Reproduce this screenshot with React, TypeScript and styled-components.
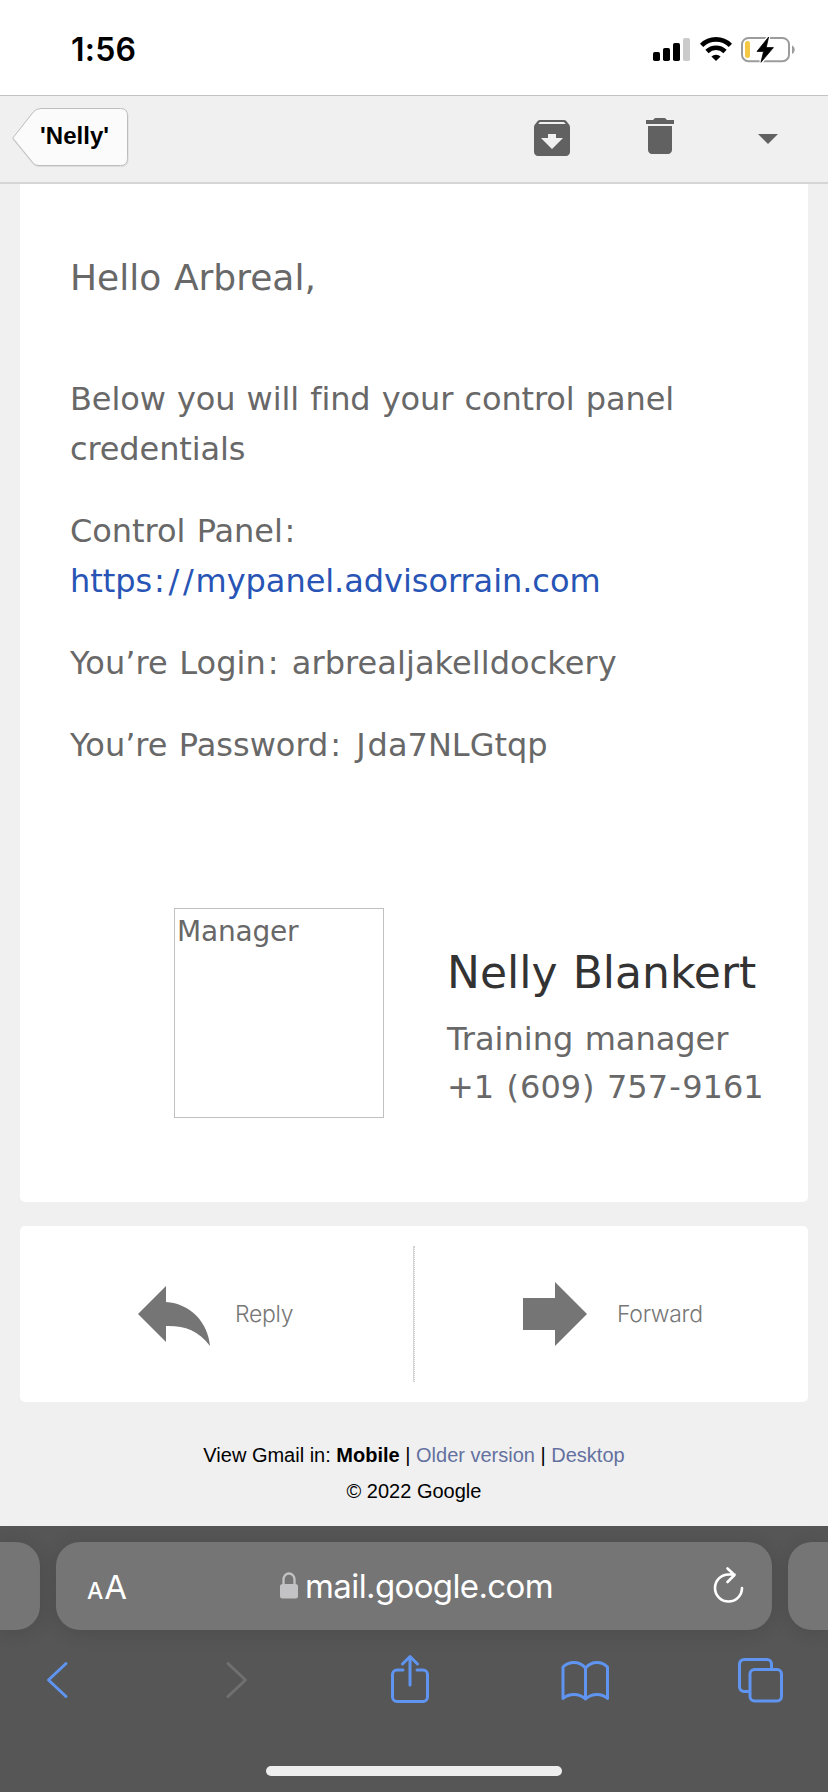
import React from 'react';
import styled, { createGlobalStyle } from 'styled-components';

const GlobalStyle = createGlobalStyle`
  html, body { margin: 0; padding: 0; background: #f0f0f0; }
  * { box-sizing: border-box; }
  svg { display: block; flex: none; }
`;

const Screen = styled.div`
  width: 828px;
  height: 1792px;
  display: flex;
  flex-direction: column;
  overflow: hidden;
  background: #f0f0f0;
`;

const StatusBar = styled.header`
  height: 95px;
  flex: none;
  display: flex;
  justify-content: space-between;
  padding: 30px 32px 0 71px;
  background: #fff;
`;

const Clock = styled.time`
  font: 600 32px/40px Inter, sans-serif;
  letter-spacing: 0.2px;
  color: #000;
`;

const StatusIcons = styled.div`
  display: flex;
  gap: 9px;
  padding-top: 6px;
`;

const MailBar = styled.nav`
  height: 89px;
  flex: none;
  display: flex;
  align-items: flex-start;
  justify-content: space-between;
  padding: 11px 36px 0 11px;
  background: #f0f0f0;
  border-top: 1px solid #c3c3c3;
  border-bottom: 2px solid #d5d5d5;
`;

const BackButton = styled.button`
  position: relative;
  width: 118px;
  height: 60px;
  padding: 0;
  border: 0;
  background: none;
`;

const BackShape = styled.svg`
  position: absolute;
  inset: 0;
`;

const BackLabel = styled.span`
  position: relative;
  display: block;
  padding: 0 0 2px 9px;
  text-align: left;
  margin-left: 20px;
  font: 700 24px/28px 'Liberation Sans', Arial, sans-serif;
  letter-spacing: 0.05px;
  color: #000;
`;

const MailActions = styled.div`
  display: flex;
  gap: 60px;
  padding-top: 7px;
`;

const IconSlot = styled.span<{ $raise?: number }>`
  display: block;
  margin-top: ${(p) => -(p.$raise ?? 0)}px;
`;

const Message = styled.article`
  flex: none;
  height: 1018px;
  margin: 0 20px;
  padding: 69px 0 0 50px;
  border-radius: 0 0 5px 5px;
  background: #fff;
  color: #686868;
  font-family: Verdana, 'DejaVu Sans', sans-serif;
  word-spacing: 1.2px;
`;

const Greeting = styled.h1`
  margin: 0 0 71px;
  font-size: 36px;
  line-height: 50px;
  font-weight: 400;
`;

const Paragraph = styled.p<{ $track?: number }>`
  width: 688px;
  margin: 0 0 32px;
  font-size: 32px;
  line-height: 50px;
  letter-spacing: ${(p) => p.$track ?? 0}px;
`;

const PanelLink = styled.a`
  color: #2754b5;
`;

const Wide = styled.span<{ $by: number }>`
  letter-spacing: ${(p) => p.$by}px;
  margin-left: ${(p) => p.$by / 2}px;
  margin-right: ${(p) => -p.$by / 2}px;
`;

const Signature = styled.section`
  display: flex;
  margin: 138px 0 0 104px;
`;

const Portrait = styled.div`
  width: 210px;
  height: 210px;
  flex: none;
  padding: 6px 0 0 2px;
  border: 1px solid #c0c0c0;
  font-size: 28px;
  line-height: 33px;
  letter-spacing: -0.2px;
`;

const Contact = styled.div`
  padding: 38px 0 0 63px;
  white-space: nowrap;
`;

const ContactName = styled.div`
  margin-bottom: 15px;
  font-size: 44px;
  line-height: 54px;
  color: #333;
`;

const ContactLine = styled.div`
  font-size: 32px;
  line-height: 48px;
`;

const ReplyCard = styled.section`
  flex: none;
  height: 176px;
  display: flex;
  margin: 24px 20px 0;
  padding: 20px 0;
  border-radius: 5px;
  background: #fff;
`;

const ReplyAction = styled.button<{ $inset: number; $gap: number; $edge: 'left' | 'right' }>`
  width: 394px;
  height: 136px;
  display: flex;
  align-items: center;
  gap: ${(p) => p.$gap}px;
  padding: 0 0 0 ${(p) => p.$inset}px;
  border: 0;
  ${(p) => (p.$edge === 'right' ? 'border-right: 1px solid #d6d6d6;' : 'border-left: 1px dotted #cccccc;')}
  background: none;
  color: #777;
  font: 300 23px/28px Inter, 'Liberation Sans', sans-serif;
  letter-spacing: -0.3px;
`;

const ReplyGlyph = styled.svg`
  margin-top: 4px;
`;

const Footer = styled.footer`
  flex: none;
  height: 124px;
  padding-top: 35px;
  text-align: center;
  font: 400 20px/36px 'Liberation Sans', Arial, sans-serif;
  color: #000;
`;

const FooterLink = styled.a`
  color: #64709f;
`;

const Browser = styled.section`
  flex: 1;
  padding-top: 16px;
  background: #565656;
`;

const TabStrip = styled.div`
  display: flex;
  gap: 16px;
`;

const NeighbourTab = styled.div<{ $side: 'left' | 'right' }>`
  width: 40px;
  height: 88px;
  flex: none;
  border-radius: ${(p) => (p.$side === 'left' ? '0 24px 24px 0' : '24px 0 0 24px')};
  background: #757575;
  box-shadow: 0 2px 20px rgba(0, 0, 0, 0.12);
`;

const AddressBar = styled.div`
  width: 716px;
  height: 88px;
  flex: none;
  display: flex;
  align-items: center;
  justify-content: space-between;
  padding: 0 28px 0 31px;
  border-radius: 24px;
  background: #757575;
  box-shadow: 0 2px 20px rgba(0, 0, 0, 0.12);
  color: #fff;
  font: 400 33px/44px Inter, sans-serif;
`;

const TextSize = styled.span`
  display: flex;
  align-items: baseline;
  gap: 1px;
  padding-top: 5px;
  font-size: 33px;
`;

const SmallA = styled.span`
  font-size: 23px;
  font-weight: 500;
`;

const Address = styled.span`
  display: flex;
  align-items: center;
  gap: 7px;
  margin-right: 6px;
  letter-spacing: -0.62px;
`;

const Toolbar = styled.div`
  display: flex;
  justify-content: space-between;
  padding: 22px 44px 0 36px;
`;

const HomeIndicator = styled.div`
  width: 296px;
  height: 10px;
  margin: 58px auto 0;
  border-radius: 5px;
  background: #eee;
`;

const blue = '#5f94f0';

const Signal = () => (
  <svg width="38" height="26" viewBox="0 0 38 26">
    <rect x="0" y="16" width="7" height="9" rx="1.8" />
    <rect x="10" y="12" width="7" height="13" rx="1.8" />
    <rect x="20" y="7" width="7" height="18" rx="1.8" />
    <rect x="30" y="2" width="7" height="23" rx="1.8" fill="#cbcbcb" />
  </svg>
);

const Wifi = () => (
  <svg width="32" height="26" viewBox="0 0 32 26">
    <g fill="none" stroke="#000" strokeWidth="4.6">
      <path d="M1.6 9.4a20.3 20.3 0 0 1 28.8 0" />
      <path d="M7 15.5a12.8 12.8 0 0 1 18 0" />
    </g>
    <path d="M16 25l-4.6-4.4a6.6 6.6 0 0 1 9.2 0z" />
  </svg>
);

const Battery = () => (
  <svg width="55" height="28" viewBox="0 0 55 28">
    <rect x="1" y="2" width="47" height="23.2" rx="6.5" fill="none" stroke="#9c9c9c" strokeWidth="2" />
    <rect x="4" y="5" width="5" height="17" rx="2.5" fill="#f5c843" />
    <path d="M51 9.5c3.6 1.6 3.6 6.8 0 8.4z" fill="#9c9c9c" />
    <path d="M27.6 1L16 15.4h6.6L20 26.2 32.4 11.6h-7.2z" stroke="#fff" strokeWidth="3.4" />
    <path d="M27.6 1L16 15.4h6.6L20 26.2 32.4 11.6h-7.2z" stroke="#000" strokeWidth=".8" strokeLinejoin="round" />
  </svg>
);

const MailIcon = ({ d }: { d: string }) => (
  <svg width="48" height="48" viewBox="0 0 24 24" fill="#616161">
    <path d={d} />
  </svg>
);

const ToolIcon = ({ children, color = blue }: { children: React.ReactNode; color?: string }) => (
  <svg width="48" height="56" viewBox="0 0 48 56" fill="none" stroke={color} strokeWidth="3" strokeLinecap="round" strokeLinejoin="round">
    {children}
  </svg>
);

export default function App() {
  return (
    <Screen>
      <GlobalStyle />
      <StatusBar>
        <Clock>1:56</Clock>
        <StatusIcons>
          <Signal />
          <Wifi />
          <Battery />
        </StatusIcons>
      </StatusBar>

      <MailBar>
        <BackButton>
          <BackShape width="118" height="60" viewBox="0 0 118 60">
            <path d="M1.8 32.5L22.5 57.5Q25 60 29 60H110Q117 60 117 53V8" transform="translate(0 -.3)" fill="none" stroke="#dadada" />
            <path d="M1.8 31L22.5 4.8Q25.6 1.5 30 1.5H109.5Q116.5 1.5 116.5 8.5V51.5Q116.5 58.5 109.5 58.5H28Q24.5 58.5 22.5 56.5Z" fill="#fbfbfb" stroke="#bdbdbd" strokeLinejoin="round" />
          </BackShape>
          <BackLabel>'Nelly'</BackLabel>
        </BackButton>
        <MailActions>
          <IconSlot>
            <MailIcon d="M20.54 5.23l-1.39-1.68C18.88 3.21 18.47 3 18 3H6c-.47 0-.88.21-1.16.55L3.46 5.23C3.17 5.57 3 6.02 3 6.5V19c0 1.1.9 2 2 2h14c1.1 0 2-.9 2-2V6.5c0-.48-.17-.93-.46-1.27zM12 17.5L6.5 12H10v-2h4v2h3.5L12 17.5zM5.12 5l.81-1h12l.94 1H5.12z" />
          </IconSlot>
          <IconSlot $raise={2}>
            <MailIcon d="M6 19c0 1.1.9 2 2 2h8c1.1 0 2-.9 2-2V7H6v12zM19 4h-3.5l-1-1h-5l-1 1H5v2h14V4z" />
          </IconSlot>
          <IconSlot>
            <MailIcon d="M7 10l5 5 5-5z" />
          </IconSlot>
        </MailActions>
      </MailBar>

      <Message>
        <Greeting>Hello Arbreal,</Greeting>
        <Paragraph $track={-0.12}>Below you will find your control panel credentials</Paragraph>
        <Paragraph $track={-0.05}>
          Control Panel<Wide $by={3.7}>:</Wide>
          <br />
          <PanelLink>
            https<Wide $by={3.7}>://</Wide>mypanel.advisorrain.com
          </PanelLink>
        </Paragraph>
        <Paragraph $track={0.06}>
          You’re Login<Wide $by={3.7}>:</Wide> arbrealjakelldockery
        </Paragraph>
        <Paragraph>
          You’re Password<Wide $by={3.7}>:</Wide> <Wide $by={4}>J</Wide>da7NLGtqp
        </Paragraph>
        <Signature>
          <Portrait>Manager</Portrait>
          <Contact>
            <ContactName>Nelly Blankert</ContactName>
            <ContactLine>Training manager</ContactLine>
            <ContactLine>
              +1 <Wide $by={2}>(</Wide>609<Wide $by={2}>)</Wide> 757<Wide $by={2.6}>-</Wide>9161
            </ContactLine>
          </Contact>
        </Signature>
      </Message>

      <ReplyCard>
        <ReplyAction $inset={118} $gap={25} $edge="right">
          <ReplyGlyph width="72" height="60" viewBox="0 0 72 60" fill="#757575">
            <path d="M0 28L28 0V16C52 17.5 70 36 72 60C60 44 46 39.5 28 40V56Z" />
          </ReplyGlyph>
          Reply
        </ReplyAction>
        <ReplyAction $inset={108} $gap={30} $edge="left">
          <svg width="64" height="64" viewBox="0 0 64 64" fill="#757575">
            <path d="M0 16H32V0L64 32L32 64V48H0Z" />
          </svg>
          Forward
        </ReplyAction>
      </ReplyCard>

      <Footer>
        <div>
          View Gmail in: <b>Mobile</b> | <FooterLink>Older version</FooterLink> | <FooterLink>Desktop</FooterLink>
        </div>
        <div>© 2022 Google</div>
      </Footer>

      <Browser>
        <TabStrip>
          <NeighbourTab $side="left" />
          <AddressBar>
            <TextSize>
              <SmallA>A</SmallA>
              <span>A</span>
            </TextSize>
            <Address>
              <svg width="18" height="28" viewBox="0 0 18 28">
                <rect x="0" y="12" width="18" height="14.5" rx="2.5" fill="#c3c3c5" />
                <path d="M3.5 13V7.5a5.5 6 0 0 1 11 0V13" fill="none" stroke="#c3c3c5" strokeWidth="2.3" />
              </svg>
              mail.google.com
            </Address>
            <svg width="32" height="40" viewBox="0 0 32 40" fill="none" stroke="#fff" strokeWidth="2.6" strokeLinecap="round" strokeLinejoin="round">
              <path d="M30 22A13.5 13.5 0 1 1 16.5 8.5H22.5M15.5 2.5L22.5 9L15.5 16" />
            </svg>
          </AddressBar>
          <NeighbourTab $side="right" />
        </TabStrip>
        <Toolbar>
          <ToolIcon>
            <path d="M30 11.5L12.5 28L30 44.5" />
          </ToolIcon>
          <ToolIcon color="#707070">
            <path d="M17 11.5L34.5 28L17 44.5" />
          </ToolIcon>
          <ToolIcon>
            <path d="M17 18H11a4.5 4.5 0 0 0-4.5 4.5V45a4.5 4.5 0 0 0 4.5 4.5H37a4.5 4.5 0 0 0 4.5-4.5V22.5A4.5 4.5 0 0 0 37 18H31M24 33V5M16.5 12L24 4.5L31.5 12" />
          </ToolIcon>
          <ToolIcon>
            <path d="M24.5 16Q19.5 10.5 13 10.5Q6.500 10.5 2 15V46.5Q6.500 42.5 13 42.5Q19.5 42.5 24.5 47Q29.5 42.5 36 42.5Q42 42.5 46.500 46.5V15Q42 10.5 36 10.5Q29.5 10.5 24.5 16ZM24.5 16V47" />
          </ToolIcon>
          <ToolIcon>
            <rect x="14" y="17.5" width="31.5" height="31.5" rx="4.5" />
            <path d="M12 39.5H8A4.5 4.5 0 0 1 3.5 35V12A4.5 4.5 0 0 1 8 7.5H31A4.5 4.5 0 0 1 35.5 12V15.5" />
          </ToolIcon>
        </Toolbar>
        <HomeIndicator />
      </Browser>
    </Screen>
  );
}
